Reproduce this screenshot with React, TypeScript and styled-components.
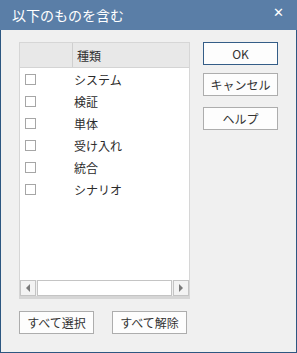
import { createGlobalStyle } from 'styled-components';
import styled from 'styled-components';

const GlobalStyle = createGlobalStyle`
  html, body {
    margin: 0;
    padding: 0;
    background: #f0f0f0;
  }
  body {
    font-family: "Noto Sans CJK JP", "Noto Sans", sans-serif;
  }
`;

const Window = styled.div`
  width: 297px;
  height: 353px;
  box-sizing: border-box;
  border: 1px solid #2d5781;
  border-top: none;
  background: #f0f0f0;
  display: flex;
  flex-direction: column;
`;

const TitleBar = styled.div`
  height: 30px;
  margin: 0 -1px;
  background: #5a7ea7;
  display: flex;
  align-items: center;
  justify-content: space-between;
  padding: 0 13px 0 12px;
  color: #fff;
  font-size: 14px;
`;

const Title = styled.span`
  margin-top: -1px;
`;

const CloseButton = styled.span`
  font-family: "DejaVu Sans", sans-serif;
  font-weight: bold;
  font-size: 13px;
  margin-top: -6px;
`;

const Body = styled.div`
  display: flex;
  padding: 12px 0 0 18px;
  gap: 13px;
`;

const LeftCol = styled.div`
  display: flex;
  flex-direction: column;
  width: 171px;
`;

const ListBox = styled.div`
  height: 257px;
  box-sizing: border-box;
  border: 1px solid #d6d6d6;
  border-bottom: 3px solid #d6d6d6;
  background: #fff;
  display: flex;
  flex-direction: column;
`;

const Header = styled.div`
  display: flex;
  height: 24px;
  background: #e8e8e8;
  border-bottom: 1px solid #d4d4d4;
  font-size: 12px;
  color: #333;
`;

const HeaderCell = styled.div<{ $w?: number }>`
  width: ${(p) => (p.$w ? `${p.$w}px` : 'auto')};
  flex: ${(p) => (p.$w ? 'none' : '1')};
  display: flex;
  align-items: center;
  padding-left: ${(p) => (p.$w ? 0 : 4)}px;
  border-right: ${(p) => (p.$w ? '1px solid #cfcfcf' : 'none')};
`;

const Rows = styled.div`
  flex: 1;
`;

const Row = styled.div`
  display: flex;
  align-items: center;
  height: 22px;
  font-size: 12px;
  color: #2b2b2b;
`;

const Check = styled.span`
  width: 9px;
  height: 9px;
  border: 1px solid #a6a6a6;
  background: #fff;
  margin-left: 5px;
  margin-right: 38px;
`;

const ScrollBar = styled.div`
  display: flex;
  height: 16px;
  background: #f0f0f0;
`;

const ScrollBtn = styled.div`
  width: 16px;
  box-sizing: border-box;
  border: 1px solid #c4c4c4;
  background: #f3f3f3;
  display: flex;
  align-items: center;
  justify-content: center;
`;

const Thumb = styled.div`
  flex: 1;
  box-sizing: border-box;
  border: 1px solid #c4c4c4;
  background: #fff;
  margin: 0 1px;
`;

const Arrow = styled.span<{ $dir: 'left' | 'right' }>`
  width: 0;
  height: 0;
  border-top: 4px solid transparent;
  border-bottom: 4px solid transparent;
  ${(p) => (p.$dir === 'left' ? 'border-right: 4px solid #7a7a7a;' : 'border-left: 4px solid #7a7a7a;')}
`;

const BottomRow = styled.div`
  display: flex;
  gap: 18px;
  margin-top: 12px;
`;

const Button = styled.div<{ $primary?: boolean }>`
  width: 75px;
  height: 23px;
  box-sizing: border-box;
  border: 1px solid ${(p) => (p.$primary ? '#345d87' : '#adadad')};
  background: #fdfdfd;
  display: flex;
  align-items: center;
  justify-content: center;
  font-size: 12px;
  color: #333;
`;

const RightCol = styled.div`
  display: flex;
  flex-direction: column;
  gap: 8px;
  & > :nth-child(3) {
    margin-top: 3px;
  }
`;

const items = ['システム', '検証', '単体', '受け入れ', '統合', 'シナリオ'];

export default function App() {
  return (
    <>
      <GlobalStyle />
      <Window>
        <TitleBar>
          <Title>以下のものを含む</Title>
          <CloseButton>✕</CloseButton>
        </TitleBar>
        <Body>
          <LeftCol>
            <ListBox>
              <Header>
                <HeaderCell $w={52} />
                <HeaderCell>種類</HeaderCell>
              </Header>
              <Rows>
                {items.map((item) => (
                  <Row key={item}>
                    <Check />
                    {item}
                  </Row>
                ))}
              </Rows>
              <ScrollBar>
                <ScrollBtn>
                  <Arrow $dir="left" />
                </ScrollBtn>
                <Thumb />
                <ScrollBtn>
                  <Arrow $dir="right" />
                </ScrollBtn>
              </ScrollBar>
            </ListBox>
            <BottomRow>
              <Button>すべて選択</Button>
              <Button>すべて解除</Button>
            </BottomRow>
          </LeftCol>
          <RightCol>
            <Button $primary>OK</Button>
            <Button>キャンセル</Button>
            <Button>ヘルプ</Button>
          </RightCol>
        </Body>
      </Window>
    </>
  );
}
